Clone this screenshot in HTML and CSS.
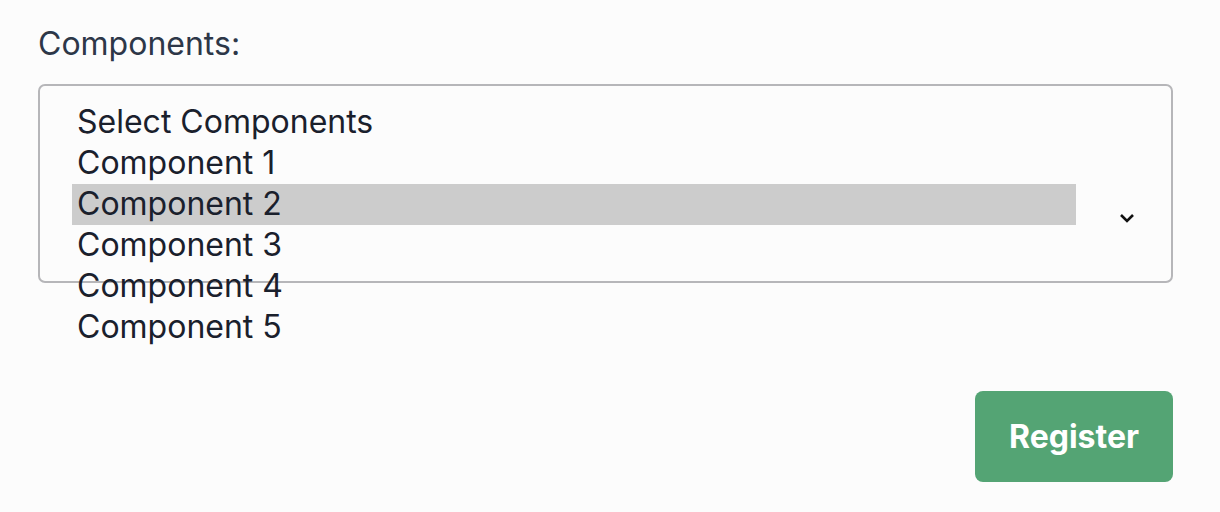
FILE: index.html
```html
<!DOCTYPE html>
<html>
<head>
<meta charset="utf-8">
<link rel="stylesheet" href="styles.css">
</head>
<body>
<div class="form">
  <label class="label">Components:</label>
  <div class="select">
    <ul class="options">
      <li class="option">Select Components</li>
      <li class="option">Component 1</li>
      <li class="option selected">Component 2</li>
      <li class="option">Component 3</li>
      <li class="option">Component 4</li>
      <li class="option">Component 5</li>
    </ul>
    <svg class="chevron" width="16" height="10" viewBox="0 0 16 10"><path d="M2 2 L8 8 L14 2" fill="none" stroke="#111" stroke-width="2.6"/></svg>
  </div>
  <div class="actions">
    <button class="btn">Register</button>
  </div>
</div>
</body>
</html>
```
FILE: styles.css
```css
html, body {
  margin: 0;
  background: #fcfcfc;
  font-family: Inter, "Noto Sans", sans-serif;
}
.form {
  padding: 24px 47px 0 38px;
}
.label {
  display: block;
  font-size: 32px;
  line-height: 40px;
  color: #2d3748;
  margin-bottom: 20px;
}
.select {
  box-sizing: border-box;
  height: 199px;
  border: 2px solid #b6b6b9;
  border-radius: 7px;
  padding: 16px 0 0 32px;
  display: flex;
  align-items: flex-start;
  position: relative;
}
.options {
  list-style: none;
  margin: 0;
  padding: 0;
  width: 1004px;
}
.option {
  font-size: 32px;
  line-height: 39px;
  height: 41px;
  box-sizing: border-box;
  padding: 0 0 2px 5px;
  color: #1a202c;
}
.option.selected {
  background: #cccccc;
}
.chevron {
  margin-left: 43px;
  margin-top: 111px;
}
.actions {
  display: flex;
  justify-content: flex-end;
  margin-top: 108px;
}
.btn {
  width: 198px;
  height: 91px;
  border: none;
  border-radius: 8px;
  background: #54a474;
  color: #fff;
  font-family: Inter, "Noto Sans", sans-serif;
  font-weight: 700;
  font-size: 32px;
}
```
